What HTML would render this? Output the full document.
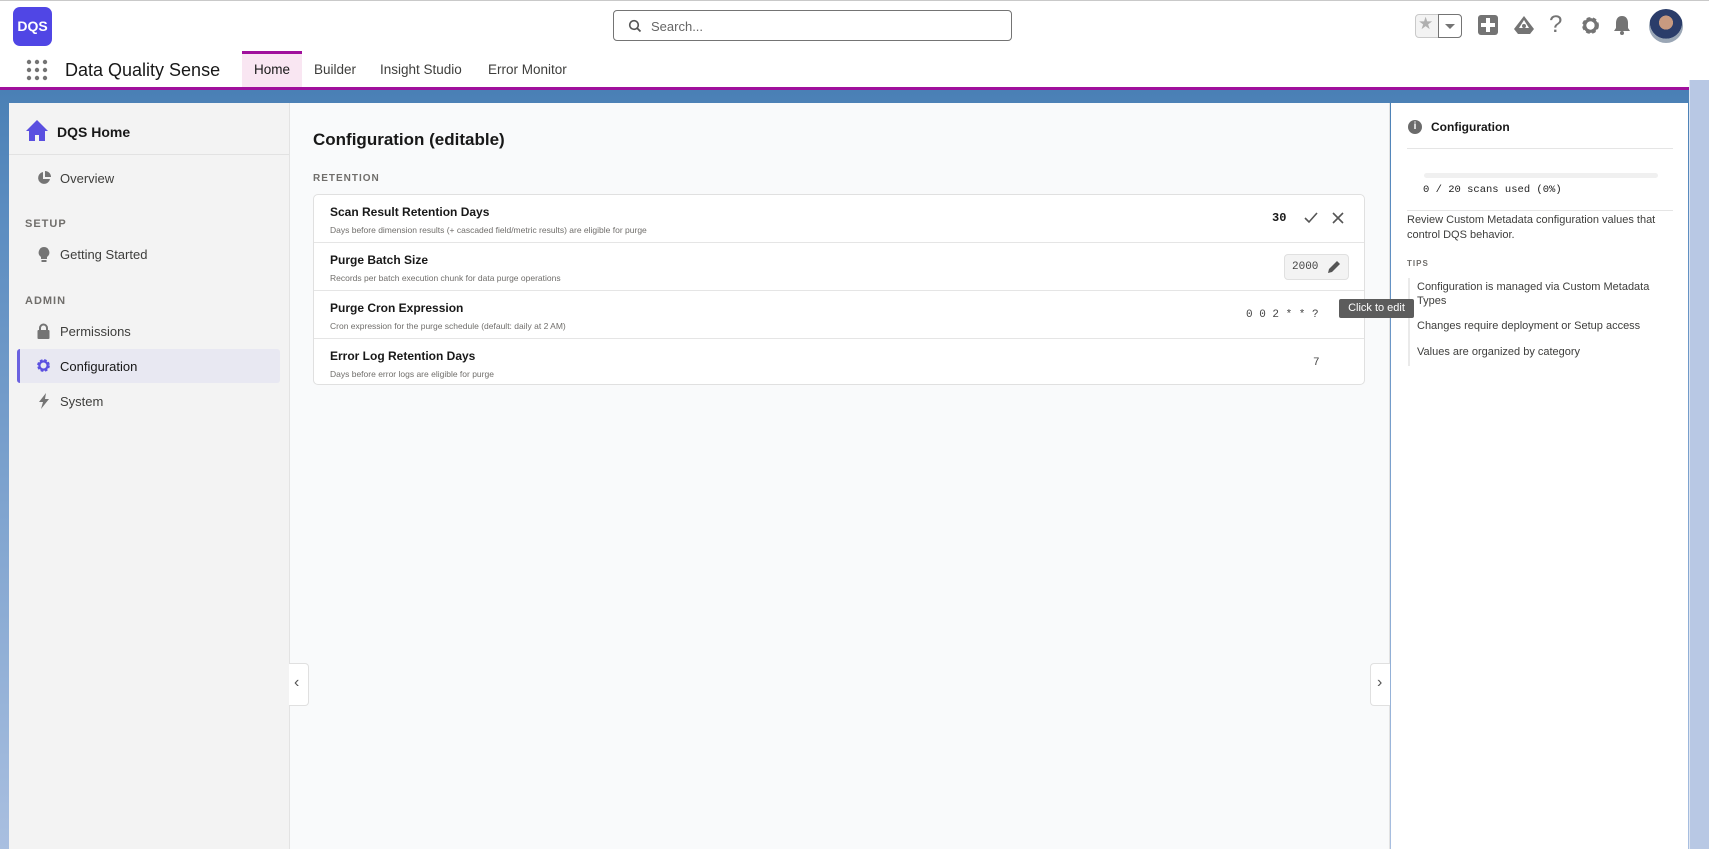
<!DOCTYPE html>
<html><head><meta charset="utf-8"><style>
*{box-sizing:border-box;margin:0;padding:0}
body{width:1709px;height:849px;overflow:hidden;font-family:"Liberation Sans",sans-serif;background:#fff;position:relative;color:#181818}
.a{position:absolute}
.mono{font-family:"Liberation Mono",monospace}
.nav{font-size:13.5px;color:#3e3e3c}
.sb{font-size:13px;color:#3e3e3c}
.sec{font-size:11px;font-weight:bold;letter-spacing:1px;color:#706e6b}
.rt{font-size:12px;font-weight:bold;color:#181818}
.rd{font-size:8.5px;color:#706e6b}
.row{position:absolute;left:0;right:0;height:48px;border-bottom:1px solid #e5e5e5}
</style></head><body>
<div class="a" style="left:0;top:0;width:1709px;height:1px;background:#c9c9c9"></div>
<div class="a" style="left:13px;top:7px;width:39px;height:39px;background:#5046e5;border-radius:7px;color:#fff;font-weight:bold;font-size:14px;line-height:39px;text-align:center">DQS</div>
<div class="a" style="left:613px;top:10px;width:399px;height:31px;border:1px solid #747474;border-radius:4px"></div>
<svg class="a" style="left:628px;top:19px" width="14" height="14" viewBox="0 0 14 14"><circle cx="6" cy="6" r="4.3" fill="none" stroke="#555" stroke-width="1.6"/><path d="M9 9l3.5 3.5" stroke="#555" stroke-width="1.8"/></svg>
<div class="a" style="left:651px;top:19px;font-size:13px;color:#666">Search...</div>
<div class="a" style="left:1415px;top:14px;width:47px;height:24px;border:1px solid #c9c9c9;border-radius:4px;background:#f3f3f3"></div>
<div class="a" style="left:1438px;top:14px;width:24px;height:24px;border:1px solid #747474;border-radius:0 4px 4px 0;background:#fff"></div>
<div class="a" style="left:1418px;top:14px;font-size:17px;color:#b0b0b0">★</div>
<div class="a" style="left:1445px;top:24px;width:0;height:0;border-left:5px solid transparent;border-right:5px solid transparent;border-top:5px solid #747474"></div>
<div class="a" style="left:1478px;top:15px;width:20px;height:20px;background:#747474;border-radius:3px"></div>
<div class="a" style="left:1486px;top:18px;width:4px;height:14px;background:#fff"></div>
<div class="a" style="left:1481px;top:23px;width:14px;height:4px;background:#fff"></div>
<svg class="a" style="left:1513px;top:15px" width="22" height="20" viewBox="0 0 22 20"><path d="M11 1L1 14l4 5h12l4-5z" fill="#747474"/><path d="M11 5l-5 8h10z" fill="#fff"/><circle cx="11" cy="11" r="2" fill="#747474"/></svg>
<div class="a" style="left:1549px;top:11px;font-size:24px;color:#747474">?</div>
<svg class="a" style="left:1580px;top:15px" width="21" height="21" viewBox="0 0 20 20"><circle cx="10" cy="10" r="6" fill="none" stroke="#747474" stroke-width="4" stroke-dasharray="3 2"/><circle cx="10" cy="10" r="5.5" fill="none" stroke="#747474" stroke-width="3"/></svg>
<svg class="a" style="left:1612px;top:15px" width="20" height="20" viewBox="0 0 20 20"><path d="M10 1c-4 0-6 3-6 7v5l-2 3h16l-2-3V8c0-4-2-7-6-7z" fill="#747474"/><circle cx="10" cy="18" r="2" fill="#747474"/></svg>
<div class="a" style="left:1649px;top:9px;width:34px;height:34px;border-radius:50%;background:radial-gradient(circle at 50% 40%,#c89a80 0 26%,#2b3d6a 27% 60%,#9aa6b5 61%)"></div>
<svg class="a" style="left:26px;top:59px" width="22" height="22" viewBox="0 0 22 22" fill="#747474"><circle cx="3" cy="3" r="2.2"/><circle cx="11" cy="3" r="2.2"/><circle cx="19" cy="3" r="2.2"/><circle cx="3" cy="11" r="2.2"/><circle cx="11" cy="11" r="2.2"/><circle cx="19" cy="11" r="2.2"/><circle cx="3" cy="19" r="2.2"/><circle cx="11" cy="19" r="2.2"/><circle cx="19" cy="19" r="2.2"/></svg>
<div class="a" style="left:65px;top:60px;font-size:18px;color:#181818">Data Quality Sense</div>
<div class="a" style="left:242px;top:51px;width:60px;height:36px;background:#f9e6f2;border-top:3px solid #a0109c"></div>
<div class="a nav" style="left:254px;top:62px;color:#181818">Home</div>
<div class="a nav" style="left:314px;top:62px">Builder</div>
<div class="a nav" style="left:380px;top:62px">Insight Studio</div>
<div class="a nav" style="left:488px;top:62px">Error Monitor</div>
<div class="a" style="left:0;top:87px;width:1709px;height:3px;background:#a0109c"></div>
<div class="a" style="left:0;top:90px;width:1709px;height:759px;background:linear-gradient(180deg,#4a80b5 0,#5b8cc0 120px,#a9bfe0 759px)"></div>
<div class="a" style="left:9px;top:103px;width:280px;height:746px;background:#f3f3f3"></div>
<svg class="a" style="left:25px;top:119px" width="24" height="23" viewBox="0 0 24 23"><path d="M12 1L1 12h3v10h6v-6h4v6h6V12h3z" fill="#5a4fe0"/></svg>
<div class="a" style="left:57px;top:124px;font-size:14px;font-weight:bold">DQS Home</div>
<div class="a" style="left:9px;top:154px;width:280px;height:1px;background:#e2e2e2"></div>
<svg class="a" style="left:37px;top:171px" width="14" height="14" viewBox="0 0 14 14"><path d="M6 1A6 6 0 1 0 13 8H6z" fill="#747474"/><path d="M8 0v6h6A6 6 0 0 0 8 0z" fill="#747474"/></svg>
<div class="a sb" style="left:60px;top:171px">Overview</div>
<div class="a sec" style="left:25px;top:218px">SETUP</div>
<svg class="a" style="left:38px;top:247px" width="12" height="16" viewBox="0 0 12 16"><path d="M6 0a5.5 5.5 0 0 0-3 10v2h6v-2A5.5 5.5 0 0 0 6 0z" fill="#747474"/><rect x="3.5" y="13" width="5" height="2" fill="#747474"/></svg>
<div class="a sb" style="left:60px;top:247px">Getting Started</div>
<div class="a sec" style="left:25px;top:295px">ADMIN</div>
<svg class="a" style="left:37px;top:323px" width="13" height="16" viewBox="0 0 13 16"><path d="M3 7V5a3.5 3.5 0 0 1 7 0v2" fill="none" stroke="#747474" stroke-width="2"/><rect x="0.5" y="7" width="12" height="9" rx="1" fill="#747474"/></svg>
<div class="a sb" style="left:60px;top:324px">Permissions</div>
<div class="a" style="left:17px;top:349px;width:263px;height:34px;background:#e8e8f2;border-left:3px solid #6b62e0;border-radius:3px"></div>
<svg class="a" style="left:36px;top:358px" width="15" height="15" viewBox="0 0 20 20"><circle cx="10" cy="10" r="6.5" fill="none" stroke="#5a4fe0" stroke-width="4" stroke-dasharray="3.2 2"/><circle cx="10" cy="10" r="5.5" fill="none" stroke="#5a4fe0" stroke-width="3"/></svg>
<div class="a sb" style="left:60px;top:359px;color:#181818">Configuration</div>
<svg class="a" style="left:38px;top:393px" width="12" height="16" viewBox="0 0 12 16"><path d="M8 0L1 9h4l-2 7 8-10H7z" fill="#747474"/></svg>
<div class="a sb" style="left:60px;top:394px">System</div>
<div class="a" style="left:289px;top:103px;width:1101px;height:746px;background:#f9fafb;border-left:1px solid #e3e3e3;border-right:1px solid #e3e3e3"></div>
<div class="a" style="left:313px;top:130px;font-size:17px;font-weight:bold">Configuration (editable)</div>
<div class="a sec" style="left:313px;top:173px;font-size:10px">RETENTION</div>
<div class="a" style="left:313px;top:194px;width:1052px;height:191px;background:#fff;border:1px solid #e0e0e0;border-radius:5px;overflow:hidden">
 <div class="row" style="top:0"><div class="a rt" style="left:16px;top:10px">Scan Result Retention Days</div><div class="a rd" style="left:16px;top:30px">Days before dimension results (+ cascaded field/metric results) are eligible for purge</div>
 <div class="a mono" style="left:958px;top:16px;font-size:12px;font-weight:bold">30</div>
 <svg class="a" style="left:990px;top:17px" width="14" height="12" viewBox="0 0 14 12"><path d="M1 6l4 4 8-9" fill="none" stroke="#555" stroke-width="1.6"/></svg>
 <svg class="a" style="left:1018px;top:17px" width="12" height="12" viewBox="0 0 12 12"><path d="M1 1l10 10M11 1L1 11" stroke="#555" stroke-width="1.6"/></svg></div>
 <div class="row" style="top:48px"><div class="a rt" style="left:16px;top:10px">Purge Batch Size</div><div class="a rd" style="left:16px;top:30px">Records per batch execution chunk for data purge operations</div>
 <div class="a" style="left:970px;top:11px;width:65px;height:26px;background:#f3f3f3;border:1px solid #e0e0e0;border-radius:4px"></div>
 <div class="a mono" style="left:978px;top:18px;font-size:11px;color:#444">2000</div>
 <svg class="a" style="left:1013px;top:17px" width="14" height="14" viewBox="0 0 14 14"><path d="M1 13l1-4 8-8 3 3-8 8z" fill="#555"/></svg></div>
 <div class="row" style="top:96px"><div class="a rt" style="left:16px;top:10px">Purge Cron Expression</div><div class="a rd" style="left:16px;top:30px">Cron expression for the purge schedule (default: daily at 2 AM)</div>
 <div class="a mono" style="left:932px;top:18px;font-size:11px;color:#444">0 0 2 * * ?</div></div>
 <div class="row" style="top:144px;border-bottom:none"><div class="a rt" style="left:16px;top:10px">Error Log Retention Days</div><div class="a rd" style="left:16px;top:30px">Days before error logs are eligible for purge</div>
 <div class="a mono" style="left:999px;top:18px;font-size:11px;color:#444">7</div></div>
</div>
<div class="a" style="left:289px;top:663px;width:20px;height:43px;background:#fff;border:1px solid #e0e0e0;border-left:none;border-radius:0 4px 4px 0"></div>
<div class="a" style="left:294px;top:674px;font-size:16px;color:#555">‹</div>
<div class="a" style="left:1370px;top:663px;width:20px;height:43px;background:#fff;border:1px solid #e0e0e0;border-right:none;border-radius:4px 0 0 4px"></div>
<div class="a" style="left:1377px;top:674px;font-size:16px;color:#555">›</div>
<div class="a" style="left:1391px;top:103px;width:297px;height:746px;background:#fff"></div>
<div class="a" style="left:1689px;top:80px;width:20px;height:769px;background:#b8c8e4;border-left:1px solid #dfe6f2"></div>
<div class="a" style="left:1408px;top:120px;width:14px;height:14px;border-radius:50%;background:#6b6b6b;color:#fff;font-size:10px;font-weight:bold;text-align:center;line-height:14px">i</div>
<div class="a" style="left:1431px;top:120px;font-size:12px;font-weight:bold">Configuration</div>
<div class="a" style="left:1407px;top:148px;width:266px;height:1px;background:#e5e5e5"></div>
<div class="a" style="left:1424px;top:173px;width:234px;height:5px;background:#f0f0f0;border-radius:3px"></div>
<div class="a mono" style="left:1423px;top:184px;font-size:10.5px;color:#222">0 / 20 scans used (0%)</div>
<div class="a" style="left:1407px;top:210px;width:266px;height:1px;background:#e5e5e5"></div>
<div class="a" style="left:1407px;top:213px;width:266px;font-size:11px;line-height:15px;color:#3e3e3c">Review Custom Metadata configuration values that control DQS behavior.</div>
<div class="a sec" style="left:1407px;top:259px;font-size:8px">TIPS</div>
<div class="a" style="left:1408px;top:278px;width:2px;height:88px;background:#eaeaea"></div>
<div class="a" style="left:1417px;top:280px;width:245px;font-size:11px;line-height:14px;color:#3e3e3c">Configuration is managed via Custom Metadata Types</div>
<div class="a" style="left:1417px;top:320px;font-size:11px;color:#3e3e3c">Changes require deployment or Setup access</div>
<div class="a" style="left:1417px;top:346px;font-size:11px;color:#3e3e3c">Values are organized by category</div>
<div class="a" style="left:1339px;top:299px;width:75px;height:19px;background:#5c5c5c;color:#fff;font-size:11px;line-height:19px;text-align:center;border-radius:2px">Click to edit</div>
</body></html>
